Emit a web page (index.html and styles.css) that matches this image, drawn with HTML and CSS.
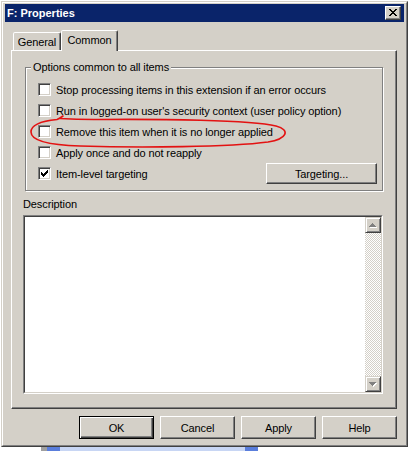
FILE: index.html
```html
<!DOCTYPE html>
<html>
<head>
<meta charset="utf-8">
<title>F: Properties</title>
<link rel="stylesheet" href="styles.css">
</head>
<body>
<div class="dialog">
  <div class="frame">
    <div class="titlebar">
      <span class="title">F: Properties</span>
      <div class="close">
        <svg width="8" height="7" viewBox="0 0 8 7" shape-rendering="crispEdges"><path d="M0 0h2v1h1v1h2V1h1V0h2v1H7v1H6v1H5v1h1v1h1v1h1v1H6V6H5V5H3v1H2v1H0V6h1V5h1V4h1V3H2V2H1V1H0z" fill="#000"/></svg>
      </div>
    </div>
    <div class="content">
      <div class="tabs">
        <div class="tab general">General</div>
        <div class="tab active">Common</div>
      </div>
      <div class="panel">
        <div class="group">
          <span class="legend">Options common to all items</span>
          <div class="row"><span class="cb"></span><span>Stop processing items in this extension if an error occurs</span></div>
          <div class="row"><span class="cb"></span><span>Run in logged-on user's security context (user policy option)</span></div>
          <div class="row"><span class="cb"></span><span>Remove this item when it is no longer applied</span></div>
          <div class="row"><span class="cb"></span><span>Apply once and do not reapply</span></div>
          <div class="row"><span class="cb"><svg width="11" height="11" viewBox="1 1 11 11" shape-rendering="crispEdges"><path d="M3 5V8H4V9H5V10H6V9H7V8H8V7H9V6H10V3H9V4H8V5H7V6H6V7H5V6H4V5Z" fill="#000"/></svg></span><span>Item-level targeting</span><button class="btn targeting">Targeting...</button></div>
        </div>
        <div class="desc-label">Description</div>
        <div class="textarea">
          <div class="ta-inner">
            <div class="scrollbar">
              <div class="sb-btn"><svg width="8" height="5" viewBox="0 0 8 5" shape-rendering="crispEdges"><path transform="translate(1 1)" d="M3 0H4V1H5V2H6V3H7V4H0V3H1V2H2V1H3Z" fill="#fff"/><path d="M3 0H4V1H5V2H6V3H7V4H0V3H1V2H2V1H3Z" fill="#808080"/></svg></div>
              <div class="sb-track"></div>
              <div class="sb-btn"><svg width="8" height="5" viewBox="0 0 8 5" shape-rendering="crispEdges"><path transform="translate(1 1)" d="M0 0H7V1H6V2H5V3H4V4H3V3H2V2H1V1H0Z" fill="#fff"/><path d="M0 0H7V1H6V2H5V3H4V4H3V3H2V2H1V1H0Z" fill="#808080"/></svg></div>
            </div>
          </div>
        </div>
      </div>
      <div class="buttons">
        <button class="btn default">OK</button>
        <button class="btn">Cancel</button>
        <button class="btn">Apply</button>
        <button class="btn">Help</button>
      </div>
    </div>
  </div>
</div>
<div class="backdrop-bottom">
  <span class="bd-grey"></span><span class="bd-blue"></span><span class="bd-light"></span><span class="bd-blue"></span>
</div>
<svg class="annotation" width="408" height="451" viewBox="0 0 408 451">
  <path d="M63 116 C61 117.5, 59.5 118.5, 57 119.5 C42 121, 31 125, 31 132 C31 140, 45 145, 80 146 C140 148, 230 147, 268 142 C287 139, 291 130, 276 126 C250 120, 160 119, 100 119.5 C80 119.7, 68 119, 60 118.5" fill="none" stroke="#e31212" stroke-width="1.6" stroke-linecap="round"/>
</svg>
</body>
</html>
```

FILE: styles.css
```css
html, body {
  margin: 0;
  padding: 0;
}
body {
  position: relative;
  width: 408px;
  height: 451px;
  overflow: hidden;
  background: #ffffff;
  font-family: "Liberation Sans", Arial, sans-serif;
  font-size: 11px;
  letter-spacing: -0.1px;
  color: #000;
}
.dialog {
  margin: 1px 0 0 1px;
  width: 407px;
  height: 446px;
  box-sizing: border-box;
  border: 1px solid;
  border-color: #d4d0c8 #404040 #404040 #d4d0c8;
  background: #d4d0c8;
}
.frame {
  height: 100%;
  box-sizing: border-box;
  border: 1px solid;
  border-color: #ffffff #808080 #808080 #ffffff;
  padding: 1px 2px 0 2px;
  display: flex;
  flex-direction: column;
}
.titlebar {
  height: 18px;
  flex: none;
  background: #0a246a;
  display: flex;
  align-items: center;
  justify-content: space-between;
  padding: 0 3px 0 2px;
  color: #fff;
  font-weight: bold;
  font-size: 11px;
  letter-spacing: 0;
}
.close {
  width: 16px;
  height: 14px;
  box-sizing: border-box;
  border: 1px solid;
  border-color: #ffffff #404040 #404040 #ffffff;
  box-shadow: inset -1px -1px #808080;
  background: #d4d0c8;
  display: flex;
  align-items: center;
  justify-content: center;
}
.close svg {
  display: block;
  margin: 0 1px 1px 0;
}
.content {
  flex: 1;
  padding: 8px 7px 0 6px;
  display: flex;
  flex-direction: column;
}
.tabs {
  display: flex;
  align-items: flex-end;
  padding-left: 2px;
  height: 21px;
  margin-bottom: -1px;
  position: relative;
  z-index: 1;
}
.tab {
  height: 18px;
  margin-bottom: 1px;
  box-sizing: border-box;
  border: 1px solid;
  border-bottom: none;
  border-color: #ffffff #404040 transparent #ffffff;
  box-shadow: inset -1px 0 #808080;
  border-radius: 2px 2px 0 0;
  background: #d4d0c8;
  display: flex;
  align-items: center;
  justify-content: center;
}
.tab.general {
  width: 48px;
  padding-top: 1px;
}
.tab.active {
  width: 57px;
  height: 21px;
  margin-bottom: 0;
  padding-bottom: 2px;
}
.panel {
  height: 359px;
  flex: none;
  box-sizing: border-box;
  border: 1px solid;
  border-color: #ffffff #404040 #404040 #ffffff;
  box-shadow: inset -1px -1px #808080;
  padding: 16px 13px 0 11px;
}
.group {
  margin-left: 2px;
  border: 1px solid #808080;
  box-shadow: 1px 1px 0 #ffffff, inset 1px 1px 0 #ffffff;
  padding: 0 5px 6px 12px;
}
.legend {
  display: block;
  width: fit-content;
  margin: -7px 0 5px -7px;
  padding: 0 2px;
  line-height: 13px;
  background: #d4d0c8;
}
.row {
  display: flex;
  align-items: center;
  height: 21px;
  white-space: nowrap;
}
.cb {
  width: 13px;
  height: 13px;
  flex: none;
  box-sizing: border-box;
  border: 1px solid;
  border-color: #808080 #ffffff #ffffff #808080;
  background: #fff;
  box-shadow: inset 1px 1px #404040, inset -1px -1px #d4d0c8;
  margin-right: 5px;
}
.cb svg {
  display: block;
}
.btn {
  width: 75px;
  height: 23px;
  box-sizing: border-box;
  border: 1px solid;
  border-color: #ffffff #404040 #404040 #ffffff;
  box-shadow: inset -1px -1px #808080;
  background: #d4d0c8;
  font-family: inherit;
  font-size: 11px;
  letter-spacing: inherit;
  color: #000;
  padding: 0;
  margin: 0;
}
.btn.default {
  border-color: #000;
  box-shadow: inset 1px 1px #ffffff, inset -1px -1px #404040, inset -2px -2px #808080;
}
.btn.targeting {
  width: 111px;
  height: 21px;
  margin-left: auto;
}
.desc-label {
  margin-top: 7px;
  line-height: 13px;
}
.textarea {
  margin-top: 4px;
  height: 179px;
  box-sizing: border-box;
  border: 1px solid;
  border-color: #808080 #ffffff #ffffff #808080;
  display: flex;
}
.ta-inner {
  flex: 1;
  border: 1px solid;
  border-color: #404040 #d4d0c8 #d4d0c8 #404040;
  background: #fff;
  display: flex;
  justify-content: flex-end;
}
.scrollbar {
  width: 16px;
  display: flex;
  flex-direction: column;
  background-color: #d4d0c8;
  background-image: repeating-conic-gradient(#ffffff 0 25%, #d4d0c8 0 50%);
  background-size: 2px 2px;
}
.sb-btn {
  height: 16px;
  flex: none;
  box-sizing: border-box;
  border: 1px solid;
  border-color: #d4d0c8 #404040 #404040 #d4d0c8;
  box-shadow: inset 1px 1px #ffffff, inset -1px -1px #808080;
  background: #d4d0c8;
  display: flex;
  align-items: center;
  justify-content: center;
}
.sb-btn svg {
  display: block;
}
.sb-track {
  flex: 1;
}
.buttons {
  margin-top: 7px;
  display: flex;
  justify-content: flex-end;
  gap: 6px;
}
.backdrop-bottom {
  display: flex;
  height: 4px;
  padding-left: 41px;
}
.bd-grey {
  width: 6px;
  background: #a0a0a0;
}
.bd-blue {
  width: 13px;
  background: #5a7edc;
}
.bd-light {
  width: 185px;
  background: #c8d6f4;
}
.annotation {
  position: absolute;
  left: 0;
  top: 0;
  pointer-events: none;
}
```
